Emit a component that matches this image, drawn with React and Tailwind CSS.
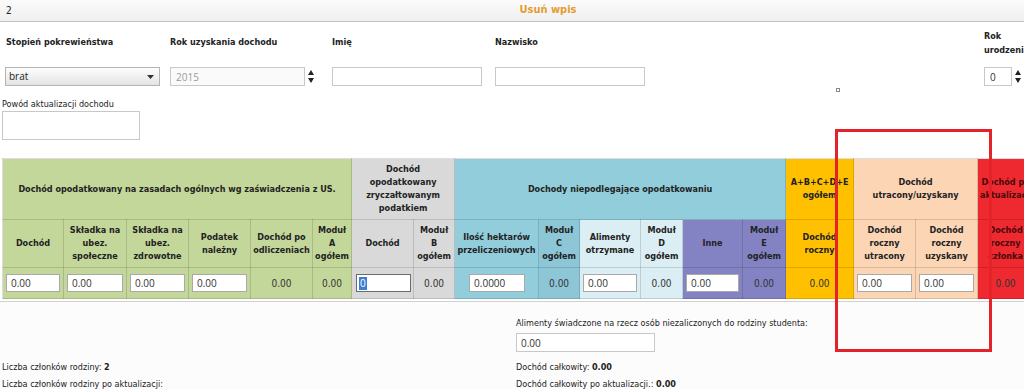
import React from "react";

const GREEN = "bg-[#c4d79b]";
const GRAY = "bg-[#d9d9d9]";
const BLUE = "bg-[#92cddc]";
const BLUE_DARK = "bg-[#8dc6d6]";
const BLUE_LIGHT = "bg-[#daeef3]";
const PURPLE = "bg-[#8383c3]";
const YELLOW = "bg-[#ffc000]";
const PEACH = "bg-[#fcd5b4]";
const RED = "bg-[#ef2930]";

const widths = [61, 63, 62, 62, 62, 39, 62, 41, 84, 41, 61, 42, 60, 43, 68, 62, 62, 56];

const Th = ({ children, className = "", colSpan }) => (
  <th
    colSpan={colSpan}
    className={`border border-[#00000022] px-[2px] text-center align-middle font-bold leading-[13px] ${className}`}
  >
    {children}
  </th>
);

const Modul = ({ letter }) => (
  <>
    Moduł
    <br />
    {letter}
    <br />
    ogółem
  </>
);

const InputCell = ({ className = "", value = "0.00" }) => (
  <td className={`border border-[#00000022] px-[3px] align-middle ${className}`}>
    <input
      readOnly
      defaultValue={value}
      className="block h-[18px] w-full border border-[#a9a9a9] bg-white px-[4px] font-['Open_Sans',sans-serif] text-[10px] text-[#333] outline-none"
    />
  </td>
);

const ValueCell = ({ className = "" }) => (
  <td className={`border border-[#00000022] text-center align-middle text-[10px] text-[#333] ${className}`}>
    0.00
  </td>
);

const Spinner = () => (
  <div className="flex flex-col justify-center gap-[3px] pl-[3px]">
    <svg width="6" height="5" viewBox="0 0 6 5">
      <path d="M3 0 L6 5 L0 5 Z" fill="#222" />
    </svg>
    <svg width="6" height="5" viewBox="0 0 6 5">
      <path d="M0 0 L6 0 L3 5 Z" fill="#222" />
    </svg>
  </div>
);

const TextBox = ({ className = "", value = "", muted }) => (
  <input
    readOnly
    defaultValue={value}
    className={`h-[19px] border border-[#c8c8c8] px-[5px] font-['Open_Sans',sans-serif] text-[10px] outline-none ${
      muted ? "bg-[#fafafa] text-[#9a9a9a]" : "bg-white text-[#333]"
    } ${className}`}
  />
);

export default function App() {
  return (
    <div className="relative h-[389px] w-[1024px] overflow-hidden bg-white font-['DejaVu_Sans_Condensed','DejaVu_Sans',sans-serif] text-[#222]">
      <div className="w-[1096px]">
        {/* Header bar */}
        <div className="grid h-[22px] grid-cols-[1fr_auto_1fr] items-center border-b border-[#c4c4c4] bg-gradient-to-b from-[#fbfbfb] to-[#efefef] px-[6px] text-[10px]">
          <span>2</span>
          <span className="text-[11px] font-bold text-[#e59c31]">Usuń wpis</span>
          <span />
        </div>

        {/* Form row */}
        <div className="flex h-[76px] items-start pt-[6px] text-[9px]">
          <div className="flex w-[170px] flex-col pl-[5px]">
            <div className="flex h-[30px] items-center pl-[1px] font-bold">Stopień pokrewieństwa</div>
            <div className="mt-[9px] flex h-[19px] w-[155px] items-center justify-between border border-[#b4b4b4] bg-gradient-to-b from-[#fdfdfd] to-[#e4e4e4] pl-[3px] pr-[5px] font-['Open_Sans',sans-serif] text-[10px] text-[#222]">
              <span>brat</span>
              <svg width="7" height="4" viewBox="0 0 7 4">
                <path d="M0 0 L7 0 L3.5 4 Z" fill="#333" />
              </svg>
            </div>
          </div>
          <div className="flex w-[162px] flex-col">
            <div className="flex h-[30px] items-center font-bold">Rok uzyskania dochodu</div>
            <div className="mt-[9px] flex h-[19px]">
              <TextBox value="2015" muted className="w-[135px]" />
              <Spinner />
            </div>
          </div>
          <div className="flex w-[163px] flex-col">
            <div className="flex h-[30px] items-center font-bold">Imię</div>
            <TextBox className="mt-[9px] w-[150px]" />
          </div>
          <div className="flex w-[489px] flex-col">
            <div className="flex h-[30px] items-center font-bold">Nazwisko</div>
            <TextBox className="mt-[9px] w-[150px]" />
            <div className="mt-[2px] pl-[341px]">
              <div className="h-[4px] w-[4px] border border-[#8a8a8a]" />
            </div>
          </div>
          <div className="flex w-[60px] flex-col">
            <div className="flex h-[30px] items-center font-bold leading-[14px]">
              Rok
              <br />
              urodzenia
            </div>
            <div className="mt-[9px] flex h-[19px]">
              <TextBox value="0" className="w-[28px] px-[4px]" />
              <Spinner />
            </div>
          </div>
        </div>

        {/* Powód */}
        <div className="pl-[2px]">
          <div className="h-[13px] text-[9px] leading-[13px]">Powód aktualizacji dochodu</div>
          <div className="h-[29px] w-[138px] border border-[#c8c8c8] bg-white" />
        </div>

        {/* Table */}
        <div className="mt-[18px] pl-[2px]">
          <table className="table-fixed border-collapse text-[9px]" style={{ width: 1031 }}>
            <colgroup>
              {widths.map((w, i) => (
                <col key={i} style={{ width: w }} />
              ))}
            </colgroup>
            <thead>
              <tr className="h-[61px]">
                <Th colSpan={6} className={GREEN}>
                  Dochód opodatkowany na zasadach ogólnych wg zaświadczenia z US.
                </Th>
                <Th colSpan={2} className={GRAY}>
                  Dochód opodatkowany zryczałtowanym podatkiem
                </Th>
                <Th colSpan={6} className={BLUE}>
                  Dochody niepodlegające opodatkowaniu
                </Th>
                <Th className={YELLOW}>A+B+C+D+E ogółem</Th>
                <Th colSpan={2} className={PEACH}>
                  Dochód utracony/uzyskany
                </Th>
                <Th className={`${RED} text-[#4a0a0a]`}>Dochód po aktualizacji</Th>
              </tr>
              <tr className="h-[48px]">
                <Th className={GREEN}>Dochód</Th>
                <Th className={GREEN}>Składka na ubez. społeczne</Th>
                <Th className={GREEN}>Składka na ubez. zdrowotne</Th>
                <Th className={GREEN}>Podatek należny</Th>
                <Th className={GREEN}>Dochód po odliczeniach</Th>
                <Th className={GREEN}>
                  <Modul letter="A" />
                </Th>
                <Th className={GRAY}>Dochód</Th>
                <Th className={GRAY}>
                  <Modul letter="B" />
                </Th>
                <Th className={BLUE}>Ilość hektarów przeliczeniowych</Th>
                <Th className={BLUE_DARK}>
                  <Modul letter="C" />
                </Th>
                <Th className={BLUE_LIGHT}>Alimenty otrzymane</Th>
                <Th className={BLUE_LIGHT}>
                  <Modul letter="D" />
                </Th>
                <Th className={PURPLE}>Inne</Th>
                <Th className={PURPLE}>
                  <Modul letter="E" />
                </Th>
                <Th className={YELLOW}>Dochód roczny</Th>
                <Th className={PEACH}>Dochód roczny utracony</Th>
                <Th className={PEACH}>Dochód roczny uzyskany</Th>
                <Th className={`${RED} text-[#4a0a0a]`}>Dochód roczny członka</Th>
              </tr>
            </thead>
            <tbody>
              <tr className="h-[31px]">
                <InputCell className={GREEN} />
                <InputCell className={GREEN} />
                <InputCell className={GREEN} />
                <InputCell className={GREEN} />
                <ValueCell className={GREEN} />
                <ValueCell className={GREEN} />
                <td className={`border border-[#00000022] pl-[4px] pr-[2px] align-middle ${GRAY}`}>
                  <div className="flex h-[18px] w-full items-center border border-[#6b6b6b] bg-white px-[2px]">
                    <span className="bg-[#3a7fd5] px-[1px] font-['Open_Sans',sans-serif] text-[10px] leading-[13px] text-white">
                      0
                    </span>
                  </div>
                </td>
                <ValueCell className={GRAY} />
                <td className={`border border-[#00000022] pl-[14px] pr-[13px] align-middle ${BLUE}`}>
                  <input
                    readOnly
                    defaultValue="0.0000"
                    className="block h-[18px] w-full border border-[#a9a9a9] bg-white px-[4px] font-['Open_Sans',sans-serif] text-[10px] text-[#333] outline-none"
                  />
                </td>
                <ValueCell className={BLUE_DARK} />
                <InputCell className={BLUE_LIGHT} />
                <ValueCell className={BLUE_LIGHT} />
                <InputCell className={PURPLE} />
                <ValueCell className={PURPLE} />
                <ValueCell className={YELLOW} />
                <InputCell className={PEACH} />
                <InputCell className={PEACH} />
                <ValueCell className={`${RED} text-[#4a0a0a]`} />
              </tr>
            </tbody>
          </table>
        </div>

        {/* Bottom summary */}
        <div className="mt-[2px] h-[100px] border-t border-[#d0d0d0] bg-[#fcfcfc] font-['Liberation_Sans_Narrow','DejaVu_Sans_Condensed',sans-serif] text-[9px] text-[#222]">
          <div className="grid grid-cols-[514px_1fr] pl-[2px]">
            <div />
            <div className="pt-[15px]">
              <div className="h-[12px] leading-[12px]">
                Alimenty świadczone na rzecz osób niezaliczonych do rodziny studenta:
              </div>
              <input
                readOnly
                defaultValue="0.00"
                className="mt-[4px] block h-[19px] w-[139px] border border-[#c8c8c8] bg-white px-[4px] font-['Open_Sans',sans-serif] text-[10px] text-[#333] outline-none"
              />
            </div>
            <div className="mt-[9px] h-[12px] leading-[12px]">
              Liczba członków rodziny: <b>2</b>
            </div>
            <div className="mt-[9px] h-[12px] leading-[12px]">
              Dochód całkowity: <b>0.00</b>
            </div>
            <div className="mt-[5px] h-[12px] leading-[12px]">Liczba członków rodziny po aktualizacji:</div>
            <div className="mt-[5px] h-[12px] leading-[12px]">
              Dochód całkowity po aktualizacji.: <b>0.00</b>
            </div>
          </div>
        </div>
      </div>

      {/* Red annotation frame */}
      <div className="pointer-events-none absolute left-[835px] top-[129px] h-[223px] w-[157px] border-[3px] border-[#e3222a]" />
    </div>
  );
}
